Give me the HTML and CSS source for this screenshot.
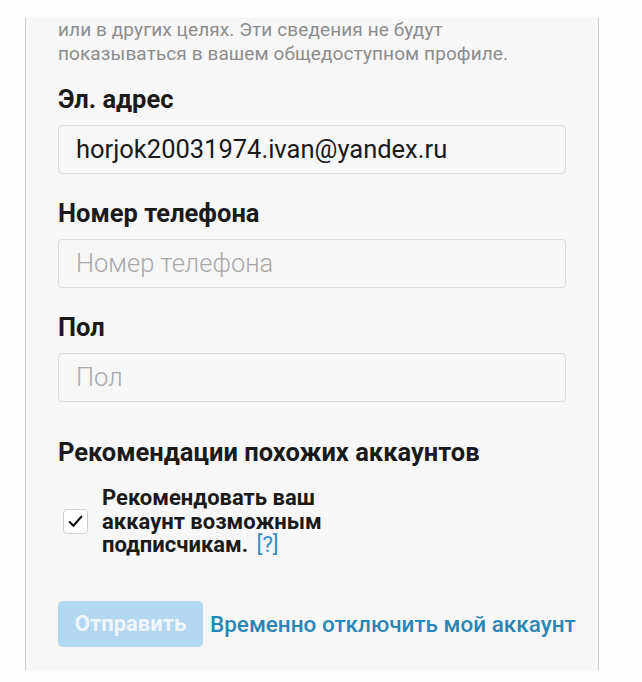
FILE: index.html
```html
<!DOCTYPE html>
<html lang="ru">
<head>
<meta charset="utf-8">
<link rel="stylesheet" href="styles.css">
</head>
<body>
<div class="card">
  <p class="note">или в других целях. Эти сведения не будут<br>показываться в вашем общедоступном профиле.</p>
  <div class="field">
    <label class="label">Эл. адрес</label>
    <div class="input">horjok20031974.ivan@yandex.ru</div>
  </div>
  <div class="field">
    <label class="label">Номер телефона</label>
    <div class="input placeholder">Номер телефона</div>
  </div>
  <div class="field">
    <label class="label">Пол</label>
    <div class="input placeholder">Пол</div>
  </div>
  <h2 class="section">Рекомендации похожих аккаунтов</h2>
  <div class="check-row">
    <span class="checkbox">
      <svg width="17" height="17" viewBox="0 0 16 16"><path d="M2.5 8.5 L6 12 L13.5 3.5" fill="none" stroke="#111" stroke-width="2" stroke-linecap="round" stroke-linejoin="round"/></svg>
    </span>
    <span class="check-text">Рекомендовать ваш<br>аккаунт возможным<br>подписчикам. <a class="help">[?]</a></span>
  </div>
  <div class="actions">
    <button class="submit">Отправить</button>
    <a class="disable">Временно отключить мой аккаунт</a>
  </div>
</div>
</body>
</html>
```

FILE: styles.css
```css
html, body {
  margin: 0;
  padding: 0;
  background: #fdfdfd;
  font-family: Roboto, "Noto Sans", sans-serif;
}
.card {
  margin: 18px 0 0 25px;
  width: 574px;
  height: 652px;
  box-sizing: border-box;
  background: #f7f7f7;
  border-left: 1px solid #cfcfcf;
  border-right: 1px solid #cfcfcf;
  padding: 0 32px 0 32px;
}
.note {
  margin: 0;
  font-size: 19px;
  line-height: 24px;
  color: #8c8c8c;
  letter-spacing: 0.1px;
}
.field {
  margin-top: 20px;
}
.field + .field {
  margin-top: 26px;
}
.label {
  display: block;
  font-size: 25.5px;
  font-weight: 700;
  line-height: 26px;
  color: #1a1a1a;
  margin-bottom: 13px;
}
.input {
  box-sizing: border-box;
  width: 508px;
  height: 49px;
  border: 1px solid #dbdbdb;
  border-radius: 4px;
  background: #f7f7f7;
  padding: 0 17px;
  font-size: 25.5px;
  line-height: 47px;
  color: #1a1a1a;
}
.placeholder {
  color: #a8a8a8;
  font-weight: 300;
}
.section {
  margin: 37px 0 0 0;
  font-size: 25.5px;
  font-weight: 700;
  line-height: 26px;
  color: #1a1a1a;
}
.check-row {
  display: flex;
  align-items: center;
  margin-top: 21px;
  margin-left: 5px;
}
.checkbox {
  flex-shrink: 0;
  width: 25px;
  height: 25px;
  box-sizing: border-box;
  border: 1px solid #d0d0d0;
  border-radius: 4px;
  background: #fff;
  display: flex;
  align-items: center;
  justify-content: center;
  margin-right: 14px;
}
.check-text {
  font-size: 22px;
  font-weight: 700;
  line-height: 23.5px;
  color: #1a1a1a;
}
.help {
  color: #2d8fc5;
  font-weight: 400;
  margin-left: 3px;
}
.actions {
  display: flex;
  align-items: center;
  margin-top: 44px;
}
.submit {
  flex-shrink: 0;
  width: 145px;
  height: 46px;
  border: none;
  border-radius: 5px;
  background: #b3d7ef;
  color: #eef6fc;
  font-family: Roboto, sans-serif;
  font-size: 22px;
  font-weight: 700;
  padding: 0;
  margin-right: 7px;
}
.disable {
  white-space: nowrap;
  font-size: 22.5px;
  font-weight: 500;
  color: #2a86b5;
}
```
